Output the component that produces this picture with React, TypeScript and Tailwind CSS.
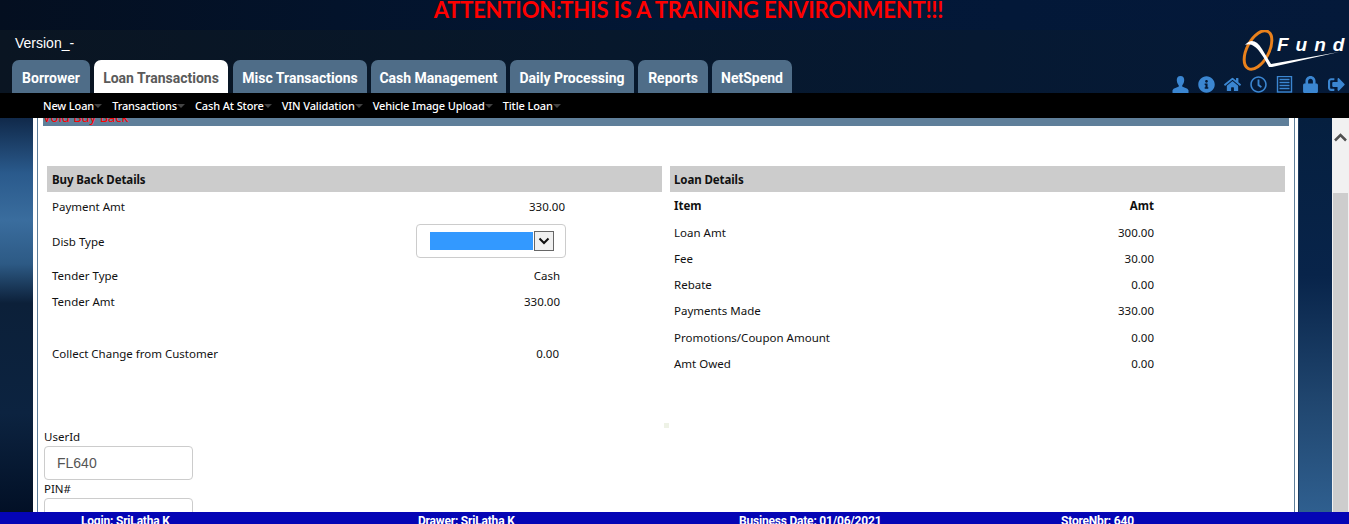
import { FaHome, FaInfoCircle, FaLock, FaRegClock, FaSignOutAlt } from 'react-icons/fa';

const tabs = [
  { label: 'Borrower', width: 'w-[78px]' },
  { label: 'Loan Transactions', width: 'w-[134px] mr-[1px]', active: true },
  { label: 'Misc Transactions', width: 'w-[134px]' },
  { label: 'Cash Management', width: 'w-[135px]' },
  { label: 'Daily Processing', width: 'w-[124px]' },
  { label: 'Reports', width: 'w-[70px]' },
  { label: 'NetSpend', width: 'w-[80px]' },
];

const subMenu = ['New Loan', 'Transactions', 'Cash At Store', 'VIN Validation', 'Vehicle Image Upload', 'Title Loan'];

const loanRows = [
  { label: 'Loan Amt', value: '300.00' },
  { label: 'Fee', value: '30.00' },
  { label: 'Rebate', value: '0.00' },
  { label: 'Payments Made', value: '330.00' },
  { label: 'Promotions/Coupon Amount', value: '0.00' },
  { label: 'Amt Owed', value: '0.00' },
];

function Logo() {
  return (
    <div className="relative w-[106px] h-[42px]">
      <svg width="106" height="42" viewBox="0 0 106 42" className="absolute inset-0">
        <ellipse cx="19" cy="20" rx="11" ry="21" fill="none" stroke="#e9811c" strokeWidth="3" transform="rotate(28 19 20)" />
        <path d="M6 15 C12 8 18 11 23 19 L32 34 L100 22 L33 37 L30 37 C24 26 16 11 6 15 Z" fill="#fff" />
      </svg>
      <span className="absolute left-[38px] top-[3px] font-['Liberation_Sans',sans-serif] font-bold italic text-[19px] leading-[24px] text-white">
        <span className="tracking-[7px]">Fun</span>d
      </span>
    </div>
  );
}

function UserIcon() {
  return (
    <svg width="17" height="17" viewBox="0 0 17 17" fill="currentColor">
      <path d="M8.5 0 C11.2 0 12.4 2 12.2 4.6 C12 7 11 8.6 10.2 9.4 L10.2 10.6 C12 11.6 15.6 12.2 16.5 14.2 L16.5 17 L0.5 17 L0.5 14.2 C1.4 12.2 5 11.6 6.8 10.6 L6.8 9.4 C6 8.6 5 7 4.8 4.6 C4.6 2 5.8 0 8.5 0 Z" />
    </svg>
  );
}

function ListIcon() {
  return (
    <svg width="17" height="17" viewBox="0 0 17 17" fill="none" stroke="currentColor">
      <rect x="1.5" y="0.5" width="14" height="15.5" strokeWidth="1.4" />
      <path d="M3.5 3.5 H13.5 M3.5 6.5 H13.5 M3.5 9.5 H13.5 M3.5 12.5 H13.5" strokeWidth="1.6" />
    </svg>
  );
}

function Header() {
  return (
    <header className="h-[118px] shrink-0 flex flex-col bg-[linear-gradient(90deg,#0a1522_0%,#07182c_45%,#051a38_100%)]">
      <div className="h-[30px] shrink-0 pl-[28px] bg-[linear-gradient(90deg,#040f20_0%,#021736_50%,#04193a_100%)] text-center font-['Lato',sans-serif] font-bold text-[22px] tracking-[-0.2px] leading-[20px] text-[#ff0000]">
        ATTENTION:THIS IS A TRAINING ENVIRONMENT!!!
      </div>
      <div className="flex-1 flex justify-between min-h-0">
        <div className="flex flex-col">
          <div className="h-[30px] pl-[15px] pt-[3px] font-['Liberation_Sans',sans-serif] text-[14px] leading-[20px] text-white">
            Version_-
          </div>
          <nav className="flex gap-[4px] pl-[12px] h-[33px]">
            {tabs.map((tab) => (
              <div
                key={tab.label}
                className={`${tab.width} rounded-t-[7px] text-center font-['Roboto',sans-serif] font-bold text-[14px] leading-[37px] ${
                  tab.active ? 'bg-white text-[#5a5a5a]' : 'bg-[#4f6d88] text-white'
                }`}
              >
                {tab.label}
              </div>
            ))}
          </nav>
        </div>
        <div className="flex flex-col items-end pr-[4px]">
          <Logo />
          <div className="mt-[4px] h-[17px] overflow-hidden flex gap-[9px] text-[#3b86d1] text-[17px]">
            <UserIcon />
            <FaInfoCircle />
            <FaHome />
            <FaRegClock />
            <ListIcon />
            <FaLock />
            <FaSignOutAlt />
          </div>
        </div>
      </div>
      <div className="h-[25px] shrink-0 bg-black flex gap-[18px] pl-[43px] font-['Noto_Sans',sans-serif] font-medium text-[11px] tracking-[-0.13px] leading-[25px] text-white">
        {subMenu.map((item) => (
          <span key={item} className="relative">
            {item}
            <span className="absolute left-full top-[11px] border-x-[4px] border-t-[4px] border-x-transparent border-t-[#444]" />
          </span>
        ))}
      </div>
    </header>
  );
}

function Row({ label, value, className }: { label: string; value: string; className: string }) {
  return (
    <div className={`flex items-center justify-between pl-[5px] ${className}`}>
      <span>{label}</span>
      <span>{value}</span>
    </div>
  );
}

function BuyBackDetails() {
  return (
    <section className="w-[615px]">
      <h2 className="h-[26px] bg-[#cccccc] pl-[5px] font-bold tracking-[-0.1px] leading-[28px] text-[#111]">Buy Back Details</h2>
      <Row label="Payment Amt" value="330.00" className="h-[30px] pr-[97px]" />
      <div className="h-[39px] flex items-start pt-[2px] pl-[5px]">
        <span className="w-[364px] self-center -mt-[2px]">Disb Type</span>
        <div className="w-[150px] h-[34px] border border-[#ccc] rounded-[4px] flex items-center pl-[13px]">
          <div className="w-[103px] h-[18px] bg-[#3399ff]" />
          <div className="w-[20px] h-[20px] ml-[1px] bg-[#f0f0f0] border border-[#666] flex items-center justify-center">
            <svg width="12" height="8" viewBox="0 0 12 8" fill="none" stroke="#111" strokeWidth="2">
              <path d="M1.5 1.5 L6 6 L10.5 1.5" />
            </svg>
          </div>
        </div>
      </div>
      <Row label="Tender Type" value="Cash" className="h-[30px] pr-[102px]" />
      <Row label="Tender Amt" value="330.00" className="h-[22px] pr-[102px]" />
      <Row label="Collect Change from Customer" value="0.00" className="h-[30px] mt-[26px] pr-[103px]" />
    </section>
  );
}

function LoanDetails() {
  return (
    <section className="w-[615px]">
      <h2 className="h-[26px] bg-[#cccccc] pl-[4px] font-bold tracking-[-0.1px] leading-[28px] text-[#111]">Loan Details</h2>
      <div className="flex items-center justify-between h-[27px] pl-[4px] pr-[131px] font-bold">
        <span>Item</span>
        <span>Amt</span>
      </div>
      {loanRows.map((row) => (
        <div key={row.label} className="flex items-center justify-between h-[26.3px] pl-[4px] pr-[131px]">
          <span>{row.label}</span>
          <span>{row.value}</span>
        </div>
      ))}
    </section>
  );
}

function CredentialField({ label, value }: { label: string; value?: string }) {
  return (
    <div>
      <div className="h-[18px] leading-[18px]">{label}</div>
      <div className="w-[149px] h-[34px] border border-[#ccc] rounded-[4px] pl-[12px] font-['Liberation_Sans',sans-serif] text-[14px] leading-[32px] text-[#555]">
        {value}
      </div>
    </div>
  );
}

function Panel() {
  return (
    <main className="relative w-[1265px] shrink-0 min-h-0 overflow-hidden bg-white pl-[4px] pr-[3px]">
      <div className="h-full border-x border-[#5f7f9a] pl-[5px] pr-[5px] font-['Noto_Sans',sans-serif] text-[11.5px] text-[#111]">
        <div className="h-[8px] flex bg-[#5f7f9a]">
          <div className="text-[13px] leading-[13px] -mt-[7px] text-[#ff0000]">Void Buy Back</div>
        </div>
        <div className="flex gap-[8px] pl-[4px] pt-[40px]">
          <BuyBackDetails />
          <LoanDetails />
        </div>
        <div className="mt-[51px] pl-[1px]">
          <CredentialField label="UserId" value="FL640" />
          <CredentialField label="PIN#" />
        </div>
      </div>
      <div className="absolute left-[631px] top-[305px] w-[5px] h-[5px] bg-[#eef2e6]" />
    </main>
  );
}

function Scrollbar() {
  return (
    <div className="w-[17px] shrink-0 bg-[#f1f1f1] flex flex-col items-center">
      <svg width="15" height="10" viewBox="0 0 15 10" fill="none" stroke="#505050" strokeWidth="2.5" className="mt-[14px]">
        <path d="M2 8.5 L7.5 3 L13 8.5" />
      </svg>
      <div className="mt-[51px] w-[15px] flex-1 bg-[#cdcdcd]" />
    </div>
  );
}

export default function App() {
  return (
    <div className="h-[524px] w-[1349px] overflow-hidden flex flex-col bg-[#04193a]">
      <Header />
      <div className="flex-1 min-h-0 flex">
        <div className="w-[33px] shrink-0 bg-[linear-gradient(180deg,#10294a_0%,#2a5a8c_14%,#3a6d9e_26%,#2d5a85_37%,#0c2039_47%,#0c2340_75%,#021026_100%)]" />
        <Panel />
        <div className="flex-1 border-l border-[#1b3a5c] bg-[linear-gradient(180deg,#051f3f_0%,#08244a_40%,#20466f_72%,#2f5f8f_100%)]" />
        <Scrollbar />
      </div>
      <footer className="h-[12px] shrink-0 overflow-hidden bg-[#0505b5] flex font-['Roboto',sans-serif] font-bold text-[12px] leading-[18px] text-white tracking-[-0.2px]">
        <span className="ml-[81px] w-[337px]">Login: SriLatha K</span>
        <span className="w-[321px]">Drawer: SriLatha K</span>
        <span className="w-[322px]">Business Date: 01/06/2021</span>
        <span>StoreNbr: 640</span>
      </footer>
    </div>
  );
}
